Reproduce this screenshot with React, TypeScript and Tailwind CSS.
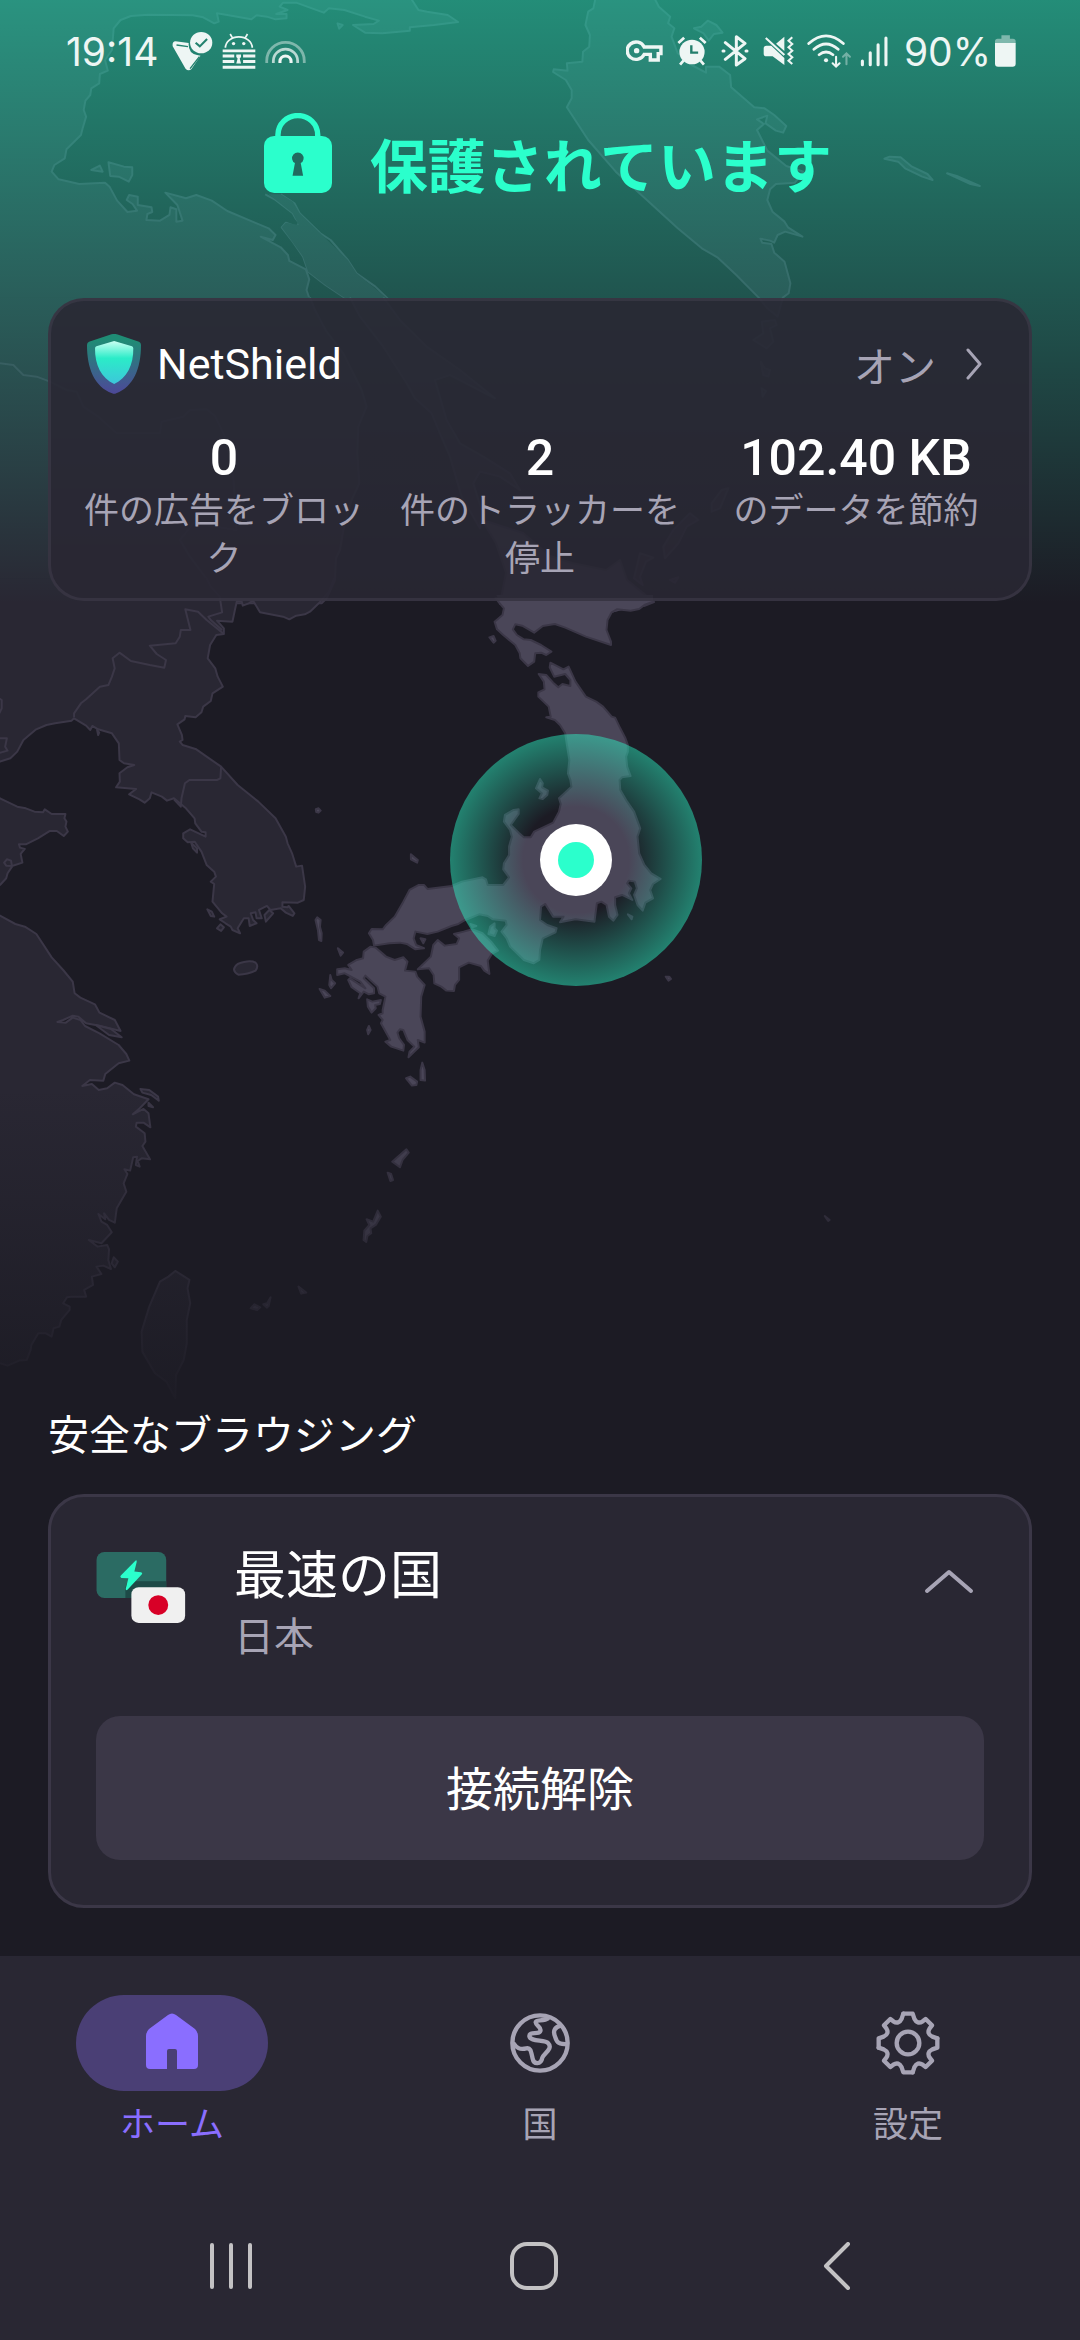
import React from "react";

const stats = [
  { value: "0", label: "件の広告をブロック" },
  { value: "2", label: "件のトラッカーを停止" },
  { value: "102.40 KB", label: "のデータを節約" },
];

function MapBackground() {
  return (
    <svg
      aria-hidden="true"
      viewBox="0 0 1080 1500"
      className="absolute inset-x-0 top-0 w-full"
    >
      <defs>
        <linearGradient id="glow" x1="0" y1="0" x2="0" y2="1">
          <stop offset="0" stopColor="#2bffcc" stopOpacity="0.5" />
          <stop offset="1" stopColor="#2bffcc" stopOpacity="0" />
        </linearGradient>
        <linearGradient id="fade" x1="0" y1="0" x2="0" y2="1">
          <stop offset="0" stopColor="#1c1b24" stopOpacity="0" />
          <stop offset="1" stopColor="#1c1b24" stopOpacity="1" />
        </linearGradient>
        <radialGradient id="pulse">
          <stop offset="0.42" stopColor="#2bffcc" stopOpacity="0" />
          <stop offset="1" stopColor="#2bffcc" stopOpacity="0.45" />
        </radialGradient>
      </defs>

      <g fill="#292733" stroke="#3b3747" strokeWidth="2" strokeLinejoin="round">
        {/* Sea of Okhotsk coast */}
        <g transform="matrix(.3444 0 0 .3333 0 0)">
          <path
            vectorEffect="non-scaling-stroke"
            d="M900 900L890 870 898 838 888 808 840 783 836 765 815 742 757 710 792 720 800 705 780 685 740 668 660 633 615 602 570 585 540 595 480 578 515 615 530 662 512 665 512 628 495 622 492 645 465 662 425 660 428 642 442 636 440 622 400 615 400 590 375 585 368 600 385 612 398 632 370 636 340 602 318 560 305 548 230 552 170 538 150 515 158 495 188 475 193 448 235 405 240 385 250 350 243 330 248 302 262 285 265 265 288 250 290 222 313 212 305 180 325 150 330 85 350 60 380 48 430 44 560 46 590 52 622 70 635 65 630 40 660 45 730 58 745 46 775 50 800 58 832 55 832 42 802 42 835 30 812 20 822 8 860 8 940 38 955 25 1000 30 1060 50 1100 62 1085 72 1025 75 1060 98 1110 100 1190 92 1190 82 1260 75 1330 66 1300 45 1240 35 1215 30 1190 -10 -20 -10 -20 900"
          />
          <path
            vectorEffect="non-scaling-stroke"
            fill="none"
            d="M770 583L800 600 850 640 858 655 868 668 862 680 830 668 818 682 850 725 880 770 895 815 945 855 1010 900M1130 900L1090 860 1035 820 1010 780 960 720 930 700 870 640 855 610 815 583"
          />
          <path
            stroke="none"
            d="M780 583L850 640 868 675 830 668 818 682 880 770 895 815 945 855 1010 900 1130 900 1035 820 1010 780 930 700 870 640 850 605 815 583Z"
          />
          <path vectorEffect="non-scaling-stroke" d="M265 510L290 497 298 515Z" />
          <path vectorEffect="non-scaling-stroke" d="M315 487L360 500 384 502 384 525 374 545 345 530 320 528Z" />
          <path vectorEffect="non-scaling-stroke" d="M980 70L995 75 985 86Z" />
        </g>
        {/* Kamchatka and the Commander islands */}
        <g transform="matrix(.3444 0 0 .3333 540 0)">
          <path
            vectorEffect="non-scaling-stroke"
            d="M162 -10L155 25 140 35 132 75 145 105 143 140 125 155 123 185 78 190 80 212 40 208 38 216 75 240 92 270 92 295 78 322 140 420 220 515 300 590 400 685 470 745 515 772 570 825 635 893 660 925 690 950 705 893 722 880 727 850 710 785 680 758 672 732 645 728 640 716 668 722 680 728 690 705 712 695 762 710 720 682 710 665 675 635 660 600 668 568 685 552 740 548 765 515 715 498 660 452 630 390 650 372 630 358 660 347 655 370 685 392 706 398 715 378 680 345 652 325 622 322 555 262 552 225 520 200 482 200 482 218 440 195 400 160 382 110 390 85 372 70 378 50 345 20 330 -10Z"
          />
          <path vectorEffect="non-scaling-stroke" d="M447 85L468 80 487 62 512 75 530 98 505 102 490 122 475 100Z" />
          <path vectorEffect="non-scaling-stroke" d="M1000 476L1015 470 1047 472 1080 500 1125 522 1140 540 1110 530 1060 505 1040 485Z" />
          <path vectorEffect="non-scaling-stroke" d="M1182 520L1210 528 1277 558 1250 552Z" />
        </g>
        {/* Primorye, Sakhalin and the Kurils */}
        <g transform="matrix(.3333 0 0 .3333 50 310)">
          <path
            vectorEffect="non-scaling-stroke"
            d="M780 -38L795 0 830 65 880 130 905 180 935 240 950 290 925 350 922 430 928 520 905 570 880 660 870 720 858 745 855 810 830 865 815 880 -170 880 -170 -38"
          />
          <path
            fill="none"
            vectorEffect="non-scaling-stroke"
            d="M-150 160L-110 165 -80 195 -40 200 0 215 50 240 80 245 100 290 145 320 200 370 330 370 335 335 400 320 420 300 470 298 495 318 525 380 550 500 560 660 430 640 390 690 420 740 480 820 495 880"
          />
          <path
            vectorEffect="non-scaling-stroke"
            d="M900 -38L930 20 1000 110 1070 220 1095 265 1145 310 1170 370 1200 440 1235 560 1290 655 1295 600 1270 520 1290 485 1350 500 1410 540 1380 490 1300 440 1230 400 1190 330 1155 210 1200 195 1335 265 1230 180 1130 110 1050 30 1000 -38"
          />
        </g>
        <g transform="matrix(.3333 0 0 .3333 560 290)">
          <path vectorEffect="non-scaling-stroke" d="M605 95L645 90 650 105 630 115 640 155 620 175 580 150 610 130Z" />
          <path vectorEffect="non-scaling-stroke" d="M602 215L615 235 630 240 625 260 610 255Z" />
          <path vectorEffect="non-scaling-stroke" d="M605 295L618 303 608 320Z" />
          <path vectorEffect="non-scaling-stroke" d="M505 595L485 600 455 640 455 665 480 655Z" />
          <path vectorEffect="non-scaling-stroke" d="M390 670L415 690 380 710 355 760 315 805 310 770 340 720Z" />
          <path vectorEffect="non-scaling-stroke" d="M240 790L280 803 258 815 240 860 248 885 222 865Z" />
          <path vectorEffect="non-scaling-stroke" d="M330 870L355 862 345 878Z" />
        </g>
        {/* Manchuria and Korea */}
        <g transform="matrix(.3444 0 0 .3333 0 580)">
          <path
            vectorEffect="non-scaling-stroke"
            d="M970 -5L955 35 930 65 900 95 885 103 860 107 840 118 822 110 755 97 735 62 722 70 705 77 702 65 688 62 682 90 675 125 630 122 650 145 650 162 628 165 610 195 603 235 625 265 632 290 647 320 617 340 612 363 590 380 585 397 568 412 538 408 536 418 515 433 528 465 530 480 522 485 530 495 570 508 600 530 642 560 690 615 750 665 800 715 830 770 835 790 848 820 860 860 877 857 886 920 882 960 865 968 820 967 820 980 835 982 838 978 855 1000 850 1008 830 998 815 985 785 990 775 978 752 990 760 1015 745 1015 742 997 728 1000 735 1020 745 1030 725 1038 722 1015 708 1015 690 1045 697 1060 675 1050 670 1040 655 1030 638 1018 658 1010 645 1000 617 965 622 912 612 905 627 890 622 875 600 855 585 815 565 785 545 787 532 775 532 760 552 748 597 770 597 757 585 755 567 730 565 715 540 685 505 655 485 662 470 650 440 637 435 655 420 668 405 658 375 643 395 627 337 622 348 605 347 580 370 562 390 555 360 550 347 540 345 490 325 460 285 448 268 438 262 450 250 437 215 415 208 422 160 430 135 435 105 448 68 480 50 515 30 535 0 545 -20 548 -20 -5"
          />
          <path
            fill="none"
            vectorEffect="non-scaling-stroke"
            d="M215 412L215 400 235 370 250 358 290 320 315 315 325 290 333 265 327 235 347 218 380 243 435 255 477 263 482 240 455 222 435 197 510 190 522 170 525 150 553 150 538 88 575 95 600 120 650 162M642 560L640 595 630 600 550 600 537 610 527 655 525 680 505 658M600 -5L612 20 638 50 645 97 605 110 612 120 645 150M-10 350L5 360 5 385 -2 400M-5 475L20 475 15 500 22 512 -5 520"
          />
          <path
            vectorEffect="non-scaling-stroke"
            d="M-20 648L0 655 50 680 75 685 100 695 125 697 130 688 150 702 190 702 187 715 193 725 190 740 197 755 185 768 165 753 145 753 110 775 75 793 55 793 58 803 72 807 60 822 65 848 35 858 18 857 12 848 20 838 32 842 35 860 22 880 18 895 0 915 -20 925"
          />
          <path vectorEffect="non-scaling-stroke" d="M690 1152Q725 1138 742 1148 752 1158 742 1172 720 1183 692 1184 668 1170 690 1152Z" />
          <path vectorEffect="non-scaling-stroke" d="M602 988L615 995 622 1010 612 1008ZM630 1045L640 1033 650 1042 642 1053ZM555 788L572 805 572 818 560 805ZM282 450L288 458 285 465ZM768 1005L782 990 793 1000 772 1025Z" />
        </g>
        {/* East China coast and Taiwan */}
        <g transform="matrix(.3827 0 0 .3333 0 900)">
          <path
            vectorEffect="non-scaling-stroke"
            d="M-20 35L0 47 40 72 65 80 95 102 135 172 165 210 190 245 195 280 210 293 248 313 260 338 300 360 315 393 260 377 225 370 205 350 190 347 165 360 150 366 172 368 190 353 210 360 222 378 260 400 310 435 330 462 338 482 310 490 275 522 270 542 235 540 215 558 240 552 258 570 280 565 300 548 320 555 350 583 388 598 365 625 347 643 375 627 388 640 393 682 375 668 357 668 355 680 378 700 380 725 372 738 392 778 370 775 360 783 365 800 355 795 358 770 348 772 340 812 325 808 333 822 323 850 330 875 305 925 300 968 285 960 272 940 275 958 257 942 265 965 280 975 292 997 265 1030 232 1020 255 1040 280 1035 285 1048 283 1080 290 1107 270 1097 252 1100 265 1122 240 1130 243 1155 220 1170 225 1190 190 1190 175 1192 165 1210 182 1220 182 1230 160 1260 155 1280 140 1285 135 1310 120 1300 100 1300 82 1335 80 1350 70 1380 50 1382 20 1397 0 1390 -20 1385"
          />
          <path
            vectorEffect="non-scaling-stroke"
            d="M440 1130L458 1113 495 1140 490 1165 497 1210 488 1260 488 1330 480 1380 460 1425 458 1495 435 1445 405 1420 372 1355 370 1295 390 1220 418 1145Z"
          />
          <path vectorEffect="non-scaling-stroke" d="M367 567L390 570 413 590 415 602 395 585 372 578ZM388 608L400 622 388 618ZM250 375L290 387 318 412 285 405ZM297 1072L308 1085 300 1102 292 1090Z" />
        </g>
      </g>

      {/* Japan */}
      <g fill="#4a4658" stroke="#3b3747" strokeWidth="2" strokeLinejoin="round">
        <path d="M482 520L523 533 550 556 572 563 606 570 620 560 627 580 654 602 644 606 500 604 506 573 496 543Z" />
        <g transform="matrix(.3444 0 0 .3333 300 580)">
          <path
            stroke="none"
            d="M570 45L592 85 700 130 900 100 1025 65 1025 45Z"
          />
          <path
            vectorEffect="non-scaling-stroke"
            d="M567 52L578 68 592 85 588 105 565 125 572 148 590 165 625 195 638 220 640 235 662 258 680 245 683 220 700 218 715 225 730 215 700 195 670 180 650 178 630 165 618 148 625 133 645 137 680 158 705 138 740 132 770 143 830 170 903 195 903 185 890 150 893 120 905 97 920 88 960 92 985 87 1000 75 1025 65"
          />
          <path
            vectorEffect="non-scaling-stroke"
            d="M780 260L800 305 830 350 860 365 880 380 905 410 915 413 930 445 945 475 952 495 952 515 947 530 950 560 960 588 935 592 928 600 930 630 950 665 970 695 988 745 980 770 985 820 1000 855 1020 880 1047 897 1025 912 1017 930 1025 955 1003 968 995 992 980 975 970 945 978 925 972 905 955 902 950 910 962 925 955 940 965 960 935 945 915 952 915 975 922 1005 910 1022 897 1010 890 975 875 965 862 970 855 1025 800 1018 755 1027 765 1010 735 1010 712 972 700 980 697 1020 718 1035 745 1045 742 1057 705 1075 697 1110 695 1140 678 1150 650 1140 610 1100 600 1075 585 1055 600 1035 597 1022 560 1018 545 1008 520 1003 480 1020 460 1032 440 1038 400 1055 370 1062 335 1055 330 1075 337 1095 360 1105 335 1108 310 1092 290 1088 260 1090 215 1097 212 1080 200 1060 208 1047 240 1048 250 1035 275 1010 300 965 318 930 345 915 360 915 370 927 440 918 470 905 530 892 540 898 545 915 590 915 607 892 590 868 592 850 607 825 607 800 615 770 610 750 592 725 595 705 620 690 635 688 635 702 612 735 635 758 650 772 670 772 680 755 735 728 752 695 757 672 752 655 788 620 785 600 778 580 782 540 775 495 770 460 755 435 740 420 715 412 728 410 722 380 692 350 692 337 710 328 708 305 693 282 715 285 735 308 750 322 762 312 785 318 785 300 770 282 738 290 725 262 727 248 765 268Z"
          />
          <path
            vectorEffect="non-scaling-stroke"
            d="M140 1155L165 1140 183 1135 185 1115 205 1100 220 1103 250 1130 275 1140 300 1132 312 1145 305 1172 335 1175 340 1190 362 1215 352 1250 350 1310 362 1355 362 1388 342 1380 345 1402 315 1432 318 1415 332 1400 312 1380 300 1350 290 1348 283 1358 288 1375 302 1395 300 1412 265 1400 248 1385 262 1380 235 1330 240 1320 228 1305 240 1300 240 1290 248 1250 230 1240 225 1220 190 1187 185 1195 215 1225 215 1240 200 1243 185 1235 170 1255 175 1240 150 1222 140 1200 145 1195 190 1225 175 1205 130 1180 108 1185 108 1168 130 1165 150 1170Z"
          />
          <path vectorEffect="non-scaling-stroke" d="M195 1258L210 1265 235 1260 232 1272 218 1275 220 1285 208 1298 197 1280Z" />
          <path
            vectorEffect="non-scaling-stroke"
            d="M342 1168L365 1145 380 1130 387 1095 400 1080 420 1097 455 1092 462 1075 447 1062 475 1055 500 1048 530 1060 555 1085 575 1112 557 1122 545 1142 550 1182 535 1172 525 1158 490 1148 462 1162 462 1200 450 1215 447 1233 425 1232 410 1220 390 1210 388 1185 375 1165Z"
          />
          <path vectorEffect="non-scaling-stroke" d="M565 1030L565 1045 572 1052 565 1068 547 1062 552 1040ZM697 597L705 610 703 622 720 632 718 645 705 657 695 655 702 640 685 625ZM322 823L342 840 340 848 322 838ZM50 1012L60 1020 58 1040 63 1060 62 1083 55 1080 52 1050 45 1020ZM110 1105L125 1118 118 1127ZM88 1185L92 1200 102 1210 90 1225 85 1215ZM57 1227L72 1232 88 1248 72 1253ZM200 1338L205 1350 198 1363 195 1350ZM355 1448L362 1470 363 1502 350 1500 350 1470ZM308 1495L320 1490 340 1505 338 1515 325 1517ZM46 688L54 685 60 692 54 698 47 696ZM1062 1190L1072 1190 1077 1197 1070 1202ZM550 172L562 168 568 182 562 188ZM952 1003L965 1010 963 1018ZM350 1075L364 1078 358 1090ZM495 1032L512 1038 500 1042Z" />
        </g>
        <g transform="matrix(.3827 0 0 .3333 0 900)">
          <path vectorEffect="non-scaling-stroke" d="M1062 748L1068 758 1052 780 1045 802 1025 785 1038 772ZM1013 818L1022 822 1027 840 1020 843ZM987 932L995 950 982 975 968 985 970 1000 960 1008 957 1026 950 1020 952 992 965 975 958 958 975 965ZM780 1160L800 1178 787 1181ZM707 1192L702 1218 697 1223 688 1213 698 1210ZM655 1225L665 1213 680 1222 672 1230Z" />
          <path vectorEffect="non-scaling-stroke" d="M2155 948L2168 960 2164 963Z" />
        </g>
      </g>

      <rect width="1080" height="604" fill="url(#glow)" />
      <rect y="1090" width="1080" height="330" fill="url(#fade)" />
      <rect y="1420" width="1080" height="80" fill="#1c1b24" />

      <circle cx="576" cy="860" r="126" fill="url(#pulse)" />
      <circle cx="576" cy="860" r="36" fill="#fff" />
      <circle cx="576" cy="860" r="18" fill="#2bffcc" />
    </svg>
  );
}

function StatusBar() {
  return (
    <div className="flex h-[102px] items-center justify-between pr-16 pl-[66px] font-['Inter',sans-serif] text-[39px] leading-none text-[#eef6f4]">
      <div className="flex items-center">
        <span>19:14</span>
        <svg className="ml-[14px] h-10 w-[41px]" viewBox="498 94 118 120" preserveAspectRatio="none" fill="currentColor">
          <path d="M508 125L546 130Q544 160 570 166L580 168 554 208Q545 216 537 207L500 140Q498 126 508 125Z" />
          <path d="M511 136L544 141M577 171L550 207" stroke="#23826e" strokeWidth="4" fill="none" />
          <circle cx="582" cy="129" r="32" />
          <path d="M566 129l12 11 21-22" fill="none" stroke="#23826e" strokeWidth="6" />
        </svg>
        <svg className="ml-[9px] h-[37px] w-[34px]" viewBox="643 98 100 112" preserveAspectRatio="none" fill="currentColor">
          <path d="M653 143A39 33 0 0 1 732 143M667 101l8 14M718 101l-8 14" fill="none" stroke="currentColor" strokeWidth="5" />
          <circle cx="677" cy="130" r="5" />
          <circle cx="707" cy="130" r="5" />
          <path d="M645 148h96v8h-96zM645 163h34v9h-34zM705 163h36v9h-36zM645 180h34v9h-34zM705 180h36v9h-36zM645 197h96v9h-96z" />
          <path d="M685 163h14v8l-4 4 4 15h-14l4-15-4-4z" />
        </svg>
        <svg className="ml-[9px] h-[23px] w-[41px]" viewBox="770 114 118 68" preserveAspectRatio="none" fill="none" stroke="currentColor" strokeWidth="8">
          <path opacity="0.45" d="M775 182V175A54 54 0 0 1 883 175V182" />
          <path opacity="0.75" d="M794 182V176A35 35 0 0 1 864 176V182" />
          <path d="M813 182V177A16 16 0 0 1 845 177V182" strokeWidth="9" />
        </svg>
      </div>

      <div className="flex items-center">
        <svg className="h-6 w-[37px]" viewBox="248 118 108 72" preserveAspectRatio="none" fill="none" stroke="currentColor" strokeWidth="10">
          <path d="M301 142H350V162H342V181H319V164H301A26 26 0 1 1 301 142Z" />
          <circle cx="279" cy="153" r="8" fill="currentColor" stroke="none" />
        </svg>
        <svg className="ml-[14px] h-[30px] w-[30px]" viewBox="396 108 88 90" preserveAspectRatio="none" fill="none" stroke="currentColor" strokeWidth="8">
          <circle cx="440" cy="156" r="37" fill="currentColor" stroke="none" />
          <path d="M400 129l17-16M463 113l17 16M415 182l-10 12M465 182l10 12" />
          <path d="M438 136v22h20" stroke="#237f6c" strokeWidth="7" />
        </svg>
        <svg className="ml-[14px] h-8 w-7" viewBox="525 105 84 96" preserveAspectRatio="none" fill="none" stroke="currentColor" strokeWidth="9" strokeLinejoin="round" strokeLinecap="round">
          <path d="M538 128L597 176 571 195V110L597 130 538 178M531 153h3M600 153h3" />
        </svg>
        <svg className="ml-[14px] h-[30px] w-[31px]" viewBox="648 108 90 90" preserveAspectRatio="none" fill="currentColor">
          <path d="M658 137H672L710 174V195L676 169H658Q650 169 650 161V145Q650 137 658 137ZM686 131L710 110V153Z" />
          <path d="M656 114L710 165M733 112L722 122 733 132 722 142 733 152 722 162 733 172 722 182 733 192" fill="none" stroke="currentColor" strokeWidth="6" />
        </svg>
        <svg className="ml-[13px] h-9 w-[45px]" viewBox="776 98 130 106" preserveAspectRatio="none" fill="none" stroke="currentColor" strokeWidth="8" strokeLinecap="round">
          <path d="M781 129Q831 84 881 129M796 146Q831 115 866 146M811 162Q831 146 851 162" />
          <circle cx="831" cy="178" r="6" fill="currentColor" stroke="none" />
          <path d="M860 168v28M850 187l10 10 10-10" strokeWidth="6" />
          <path d="M890 190v-30M880 168l10-10 10 10" strokeWidth="6" opacity="0.4" />
        </svg>
        <svg className="ml-2 h-[31px] w-7" viewBox="930 106 82 92" preserveAspectRatio="none" stroke="currentColor" strokeWidth="9" strokeLinecap="round">
          <path d="M937 180V191M960 156V191M983 132V191M1006 112V191" />
        </svg>
        <span className="ml-4">90%</span>
        <svg className="ml-1 h-8 w-[21px]" viewBox="1318 104 62 95" preserveAspectRatio="none" fill="currentColor">
          <path opacity="0.45" d="M1337 105h25v10h9q8 0 8 8v6h-61v-6q0-8 8-8h11z" />
          <path d="M1318 128h61v61q0 9-9 9h-43q-9 0-9-9z" />
        </svg>
      </div>
    </div>
  );
}

export default function App() {
  return (
    <div
      lang="ja"
      className="relative flex min-h-screen w-full flex-col overflow-hidden bg-[#1c1b24] font-['Noto_Sans_CJK_JP',sans-serif] text-white"
    >
      <MapBackground />

      <div className="relative">
        <StatusBar />
        <div className="mt-[11px] flex items-end justify-center gap-[38px] pl-4 text-[#2bffcc]">
          <svg className="h-20 w-[68px]" viewBox="763 338 200 241" preserveAspectRatio="none">
            <path d="M804 414V404A58 58 0 0 1 921 404V414" fill="none" stroke="currentColor" strokeWidth="16" />
            <rect x="763" y="407" width="200" height="172" rx="30" fill="currentColor" />
            <path d="M854 489A17 17 0 1 1 871 489L878 527H847Z" fill="#216b5f" />
          </svg>
          <h1 className="text-[58px] leading-[60px] font-bold">保護されています</h1>
        </div>
      </div>

      <section
        aria-label="NetShield"
        className="relative mx-12 mt-[105px] rounded-[36px] border-3 border-[#4a4658]/40 bg-[#292733]/90 px-[15px] pt-[33px] pb-[18px]"
      >
        <button type="button" className="flex w-full items-center pr-8 pl-[21px] text-left">
          <svg className="h-15 w-[54px]" viewBox="111 72 161 180" preserveAspectRatio="none">
            <defs>
              <linearGradient id="shieldOuter" x1="0" y1="0" x2="0" y2="1">
                <stop offset="0.1" stopColor="#1f8c75" />
                <stop offset="1" stopColor="#4d4898" />
              </linearGradient>
              <linearGradient id="shieldInner" x1="0" y1="0" x2="0" y2="1">
                <stop offset="0" stopColor="#c9fff2" />
                <stop offset="0.4" stopColor="#2becc8" />
                <stop offset="1" stopColor="#3dc6da" />
              </linearGradient>
            </defs>
            <path fill="url(#shieldOuter)" d="M184 73Q192 70 200 73L266 95Q272 98 272 105C272 175 250 230 198 250Q192 253 186 250C133 230 111 175 111 105Q111 98 117 95Z" />
            <path fill="url(#shieldInner)" d="M192 93L245 109Q249 110 249 115C250 165 230 205 192 222C154 205 134 165 135 115Q135 110 139 109Z" />
          </svg>
          <span className="ml-4 font-['Roboto',sans-serif] text-[43px] leading-[60px]">NetShield</span>
          <span className="ml-auto text-[41px] leading-[60px] text-[#a7a4b5]">オン</span>
          <svg className="ml-[30px] h-8 w-4" viewBox="0 0 16 32" fill="none" stroke="#a7a4b5" strokeWidth="3" strokeLinecap="round" strokeLinejoin="round">
            <path d="M2 2L14 16 2 30" />
          </svg>
        </button>
        <dl className="mt-[38px] grid grid-cols-3 text-center">
          {stats.map((s) => (
            <div key={s.value} className="flex flex-col-reverse justify-end px-4">
              <dt className="text-[35px] leading-12 break-all text-[#a7a4b5]">{s.label}</dt>
              <dd className="font-['Roboto',sans-serif] text-[50px] leading-[52px] font-medium whitespace-nowrap">{s.value}</dd>
            </div>
          ))}
        </dl>
      </section>

      <div className="flex-1" />

      <main className="relative px-12 pb-12">
        <h2 className="text-[41px] leading-[60px]">安全なブラウジング</h2>
        <section className="mt-8 rounded-[36px] border-3 border-[#3b3747] bg-[#292733] px-[45px] pt-[43px] pb-[45px]">
          <div className="flex items-start">
            <svg className="mt-3 h-[71px] w-[90px]" viewBox="80 95 270 214">
              <rect x="81" y="95" width="210" height="139" rx="24" fill="#2b6b63" />
              <path d="M168 234V205Q168 183 192 183H291V234Z" fill="#1d4a47" />
              <path d="M198 121Q203 118 202 125L195 154 215 156Q221 158 217 163L175 208Q169 213 169 206L177 174 156 173Q150 170 155 165Z" fill="#2bffcc" />
              <rect x="186" y="201" width="162" height="108" rx="22" fill="#f0f0f0" />
              <circle cx="267" cy="255" r="30" fill="#d80027" />
            </svg>
            <div className="ml-12">
              <h3 className="text-[52px] leading-16">最速の国</h3>
              <p className="text-[40px] leading-[60px] text-[#a7a4b5]">日本</p>
            </div>
            <button type="button" aria-label="折りたたむ" className="mt-7 mr-[10px] ml-auto">
              <svg className="h-[26px] w-[50px]" viewBox="0 0 50 26" fill="none" stroke="#a7a4b5" strokeWidth="4" strokeLinecap="round" strokeLinejoin="round">
                <path d="M3 23L25 4 47 23" />
              </svg>
            </button>
          </div>
          <button
            type="button"
            className="mt-[52px] h-36 w-full rounded-3xl bg-[#3b3747] pb-1 text-[47px] leading-[60px]"
          >
            接続解除
          </button>
        </section>
      </main>

      <footer className="relative bg-[#292733]">
        <nav className="grid grid-cols-3 gap-6 pt-[39px] text-[35px] leading-[52px] text-[#a7a4b5]">
          <a href="#home" aria-current="page" className="flex flex-col items-center gap-[5px] text-[#8a6eff]">
            <span className="flex h-24 w-48 items-center justify-center rounded-full bg-[#4a3f75]">
              <svg className="mb-1 h-14 w-[52px]" viewBox="0 0 52 56" fill="currentColor">
                <path d="M22 2Q26-1 30 2L49 16Q52 19 52 23V52Q52 56 48 56H31V38Q31 36 29 36H23Q21 36 21 38V56H4Q0 56 0 52V23Q0 19 3 16Z" />
              </svg>
            </span>
            ホーム
          </a>
          <a href="#countries" className="flex flex-col items-center gap-[5px]">
            <span className="flex h-24 items-center">
              <svg className="h-15 w-15" viewBox="90 69 180 180" fill="none" stroke="currentColor" strokeWidth="13">
                <circle cx="180" cy="159" r="83" />
                <path d="M206 84C190 96 167 86 167 97C168 108 188 112 180 125C173 134 148 124 148 138C150 156 194 148 204 159C221 176 191 190 187 203C183 225 161 224 158 206C153 184 152 172 139 175C119 180 110 174 99 158M243 106C222 112 218 124 226 142C231 159 237 163 264 163" />
              </svg>
            </span>
            国
          </a>
          <a href="#settings" className="flex flex-col items-center gap-[5px]">
            <span className="flex h-24 items-center">
              <svg className="h-16 w-16" viewBox="-96 -96 192 192" fill="none" stroke="currentColor" strokeWidth="13" strokeLinejoin="round" strokeLinecap="round">
                <circle r="34" />
                {[0, 90, 180, 270].map((a) => (
                  <path key={a} transform={`rotate(${a})`} d="M-14 -88H14L19 -73Q28 -55 44 -65L53 -72 72 -53 65 -44Q55 -28 73 -19L88 -14" />
                ))}
              </svg>
            </span>
            設定
          </a>
        </nav>
        <div className="mt-[92px] mb-12 grid grid-cols-3 pr-[92px] pl-20 text-[#c3c2c4]">
          <button type="button" aria-label="最近" className="flex h-[52px] items-center justify-center">
            <svg className="h-12 w-11" viewBox="0 0 44 48" stroke="currentColor" strokeWidth="4" strokeLinecap="round">
              <path d="M3 3V45M22 3V45M41 3V45" />
            </svg>
          </button>
          <button type="button" aria-label="ホーム画面" className="flex h-[52px] items-center justify-center">
            <svg className="h-12 w-12" viewBox="0 0 48 48" fill="none" stroke="currentColor" strokeWidth="4">
              <rect x="2" y="2" width="44" height="44" rx="15" />
            </svg>
          </button>
          <button type="button" aria-label="戻る" className="flex h-[52px] items-center justify-center">
            <svg className="h-12 w-7" viewBox="0 0 28 48" fill="none" stroke="currentColor" strokeWidth="4" strokeLinecap="round" strokeLinejoin="round">
              <path d="M25 2L3 24 25 46" />
            </svg>
          </button>
        </div>
      </footer>
    </div>
  );
}
